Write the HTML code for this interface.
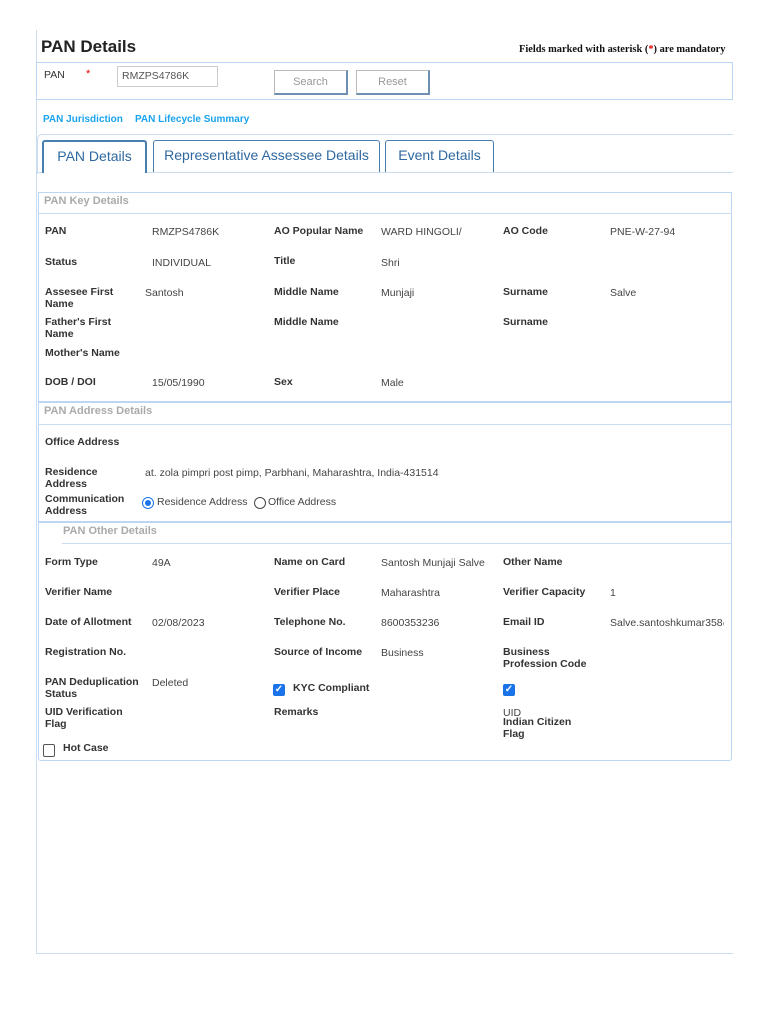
<!DOCTYPE html>
<html><head><meta charset="utf-8"><style>
*{margin:0;padding:0;box-sizing:border-box}
body{width:768px;height:1024px;background:#fff;position:relative;font-family:"Liberation Sans",sans-serif;overflow:hidden}
div,span{position:absolute}
.l{font-size:10.5px;font-weight:bold;color:#333;line-height:12px}
.v{font-size:10.5px;color:#444;line-height:12px}
.box{border:1px solid #bcd6f3}
.hd{font-size:11px;font-weight:bold;color:#aaa}
.tab{border:1.5px solid #4a7db0;border-bottom:none;border-radius:3px 3px 0 0;color:#2f68a0;font-size:14px;text-align:center;line-height:28px;background:#fff}
.btn{border:1px solid #bbb;border-bottom:2px solid #6f8fb0;border-right:2px solid #6f8fb0;color:#999;font-size:11px;text-align:center;line-height:22px;background:#fff}
.cb{width:12px;height:12px;background:#1a73e8;border-radius:2px;color:#fff;font-size:10px;line-height:12px;text-align:center;font-weight:bold}
</style></head><body>
<div style="left:36px;top:30px;width:1px;height:924px;background:#c9dcf0"></div>
<div style="left:36px;top:953px;width:697px;height:1px;background:#c9dcf0"></div>
<span style="left:41px;top:37px;font-size:17px;font-weight:bold;color:#222">PAN Details</span>
<span style="left:519px;top:44px;font-family:'Liberation Serif',serif;font-size:10.4px;font-weight:bold;color:#111">Fields marked with asterisk (<span style="position:static;color:#d00">*</span>) are mandatory</span>
<div class="box" style="left:36px;top:62px;width:697px;height:38px"></div>
<span class="v" style="left:44px;top:69px;color:#333">PAN</span>
<span style="left:86px;top:68px;color:#d00;font-size:11px">*</span>
<div style="left:117px;top:66px;width:101px;height:21px;border:1px solid #ccc"></div>
<span class="v" style="left:122px;top:70px;color:#555">RMZPS4786K</span>
<div class="btn" style="left:274px;top:70px;width:74px;height:25px">Search</div>
<div class="btn" style="left:356px;top:70px;width:74px;height:25px">Reset</div>
<span style="left:43px;top:114px;font-size:10px;font-weight:bold;color:#1aa3ef">PAN Jurisdiction</span>
<span style="left:135px;top:114px;font-size:10px;font-weight:bold;color:#1aa3ef">PAN Lifecycle Summary</span>
<div style="left:37px;top:134px;width:696px;height:40px;border:1px solid #c9dcf0;border-bottom:none;border-right:none;border-radius:5px 0 0 0"></div>
<div style="left:37px;top:172px;width:696px;height:1px;background:#c9dcf0"></div>
<div class="tab" style="left:42px;top:140px;width:105px;height:33px;border-width:2px;font-size:14px">PAN Details</div>
<div class="tab" style="left:153px;top:140px;width:227px;height:32px">Representative Assessee Details</div>
<div class="tab" style="left:385px;top:140px;width:109px;height:32px">Event Details</div>

<div class="box" style="left:38px;top:192px;width:694px;height:210px"></div>
<div style="left:38px;top:213px;width:694px;height:1px;background:#c9dcf0"></div>
<span class="hd" style="left:44px;top:195px">PAN Key Details</span>
<span class="l" style="left:45px;top:225px">PAN</span><span class="v" style="left:152px;top:226px">RMZPS4786K</span>
<span class="l" style="left:274px;top:225px">AO Popular Name</span><span class="v" style="left:381px;top:226px">WARD HINGOLI/</span>
<span class="l" style="left:503px;top:225px">AO Code</span><span class="v" style="left:610px;top:226px">PNE-W-27-94</span>
<span class="l" style="left:45px;top:256px">Status</span><span class="v" style="left:152px;top:257px">INDIVIDUAL</span>
<span class="l" style="left:274px;top:255px">Title</span><span class="v" style="left:381px;top:257px">Shri</span>
<span class="l" style="left:45px;top:286px">Assesee First<br>Name</span><span class="v" style="left:145px;top:287px">Santosh</span>
<span class="l" style="left:274px;top:286px">Middle Name</span><span class="v" style="left:381px;top:287px">Munjaji</span>
<span class="l" style="left:503px;top:286px">Surname</span><span class="v" style="left:610px;top:287px">Salve</span>
<span class="l" style="left:45px;top:316px">Father's First<br>Name</span>
<span class="l" style="left:274px;top:316px">Middle Name</span>
<span class="l" style="left:503px;top:316px">Surname</span>
<span class="l" style="left:45px;top:347px">Mother's Name</span>
<span class="l" style="left:45px;top:376px">DOB / DOI</span><span class="v" style="left:152px;top:377px">15/05/1990</span>
<span class="l" style="left:274px;top:376px">Sex</span><span class="v" style="left:381px;top:377px">Male</span>

<div class="box" style="left:38px;top:402px;width:694px;height:120px"></div>
<div style="left:38px;top:424px;width:694px;height:1px;background:#c9dcf0"></div>
<span class="hd" style="left:44px;top:405px">PAN Address Details</span>
<span class="l" style="left:45px;top:436px">Office Address</span>
<span class="l" style="left:45px;top:466px">Residence<br>Address</span>
<span class="v" style="left:145px;top:467px">at. zola pimpri post pimp, Parbhani, Maharashtra, India-431514</span>
<span class="l" style="left:45px;top:493px">Communication<br>Address</span>
<div style="left:142px;top:497px;width:12px;height:12px;border-radius:50%;border:1.5px solid #1a73e8"><div style="left:1.5px;top:1.5px;width:6px;height:6px;border-radius:50%;background:#1a73e8"></div></div>
<span class="v" style="left:157px;top:496px">Residence Address</span>
<div style="left:254px;top:497px;width:12px;height:12px;border-radius:50%;border:1px solid #444"></div>
<span class="v" style="left:268px;top:496px">Office Address</span>

<div class="box" style="left:38px;top:522px;width:694px;height:239px;border-radius:0 0 3px 3px"></div>
<div style="left:62px;top:543px;width:670px;height:1px;background:#c9dcf0"></div>
<span class="hd" style="left:63px;top:525px">PAN Other Details</span>
<span class="l" style="left:45px;top:556px">Form Type</span><span class="v" style="left:152px;top:557px">49A</span>
<span class="l" style="left:274px;top:556px">Name on Card</span><span class="v" style="left:381px;top:557px">Santosh Munjaji Salve</span>
<span class="l" style="left:503px;top:556px">Other Name</span>
<span class="l" style="left:45px;top:586px">Verifier Name</span>
<span class="l" style="left:274px;top:586px">Verifier Place</span><span class="v" style="left:381px;top:587px">Maharashtra</span>
<span class="l" style="left:503px;top:586px">Verifier Capacity</span><span class="v" style="left:610px;top:587px">1</span>
<span class="l" style="left:45px;top:616px">Date of Allotment</span><span class="v" style="left:152px;top:617px">02/08/2023</span>
<span class="l" style="left:274px;top:616px">Telephone No.</span><span class="v" style="left:381px;top:617px">8600353236</span>
<span class="l" style="left:503px;top:616px">Email ID</span><span class="v" style="left:610px;top:617px;width:114px;overflow:hidden;white-space:nowrap">Salve.santoshkumar358@</span>
<span class="l" style="left:45px;top:646px">Registration No.</span>
<span class="l" style="left:274px;top:646px">Source of Income</span><span class="v" style="left:381px;top:647px">Business</span>
<span class="l" style="left:503px;top:646px">Business<br>Profession Code</span>
<span class="l" style="left:45px;top:676px">PAN Deduplication<br>Status</span><span class="v" style="left:152px;top:677px">Deleted</span>
<div class="cb" style="left:273px;top:684px">✓</div>
<span class="l" style="left:293px;top:682px">KYC Compliant</span>
<div class="cb" style="left:503px;top:684px">✓</div>
<span class="l" style="left:45px;top:706px">UID Verification<br>Flag</span>
<span class="l" style="left:274px;top:706px">Remarks</span>
<span class="v" style="left:503px;top:707px">UID</span>
<span class="l" style="left:503px;top:716px">Indian Citizen<br>Flag</span>
<div style="left:43px;top:744px;width:12px;height:13px;border:1px solid #555;border-radius:2px"></div>
<span class="l" style="left:63px;top:742px">Hot Case</span>
</body></html>
